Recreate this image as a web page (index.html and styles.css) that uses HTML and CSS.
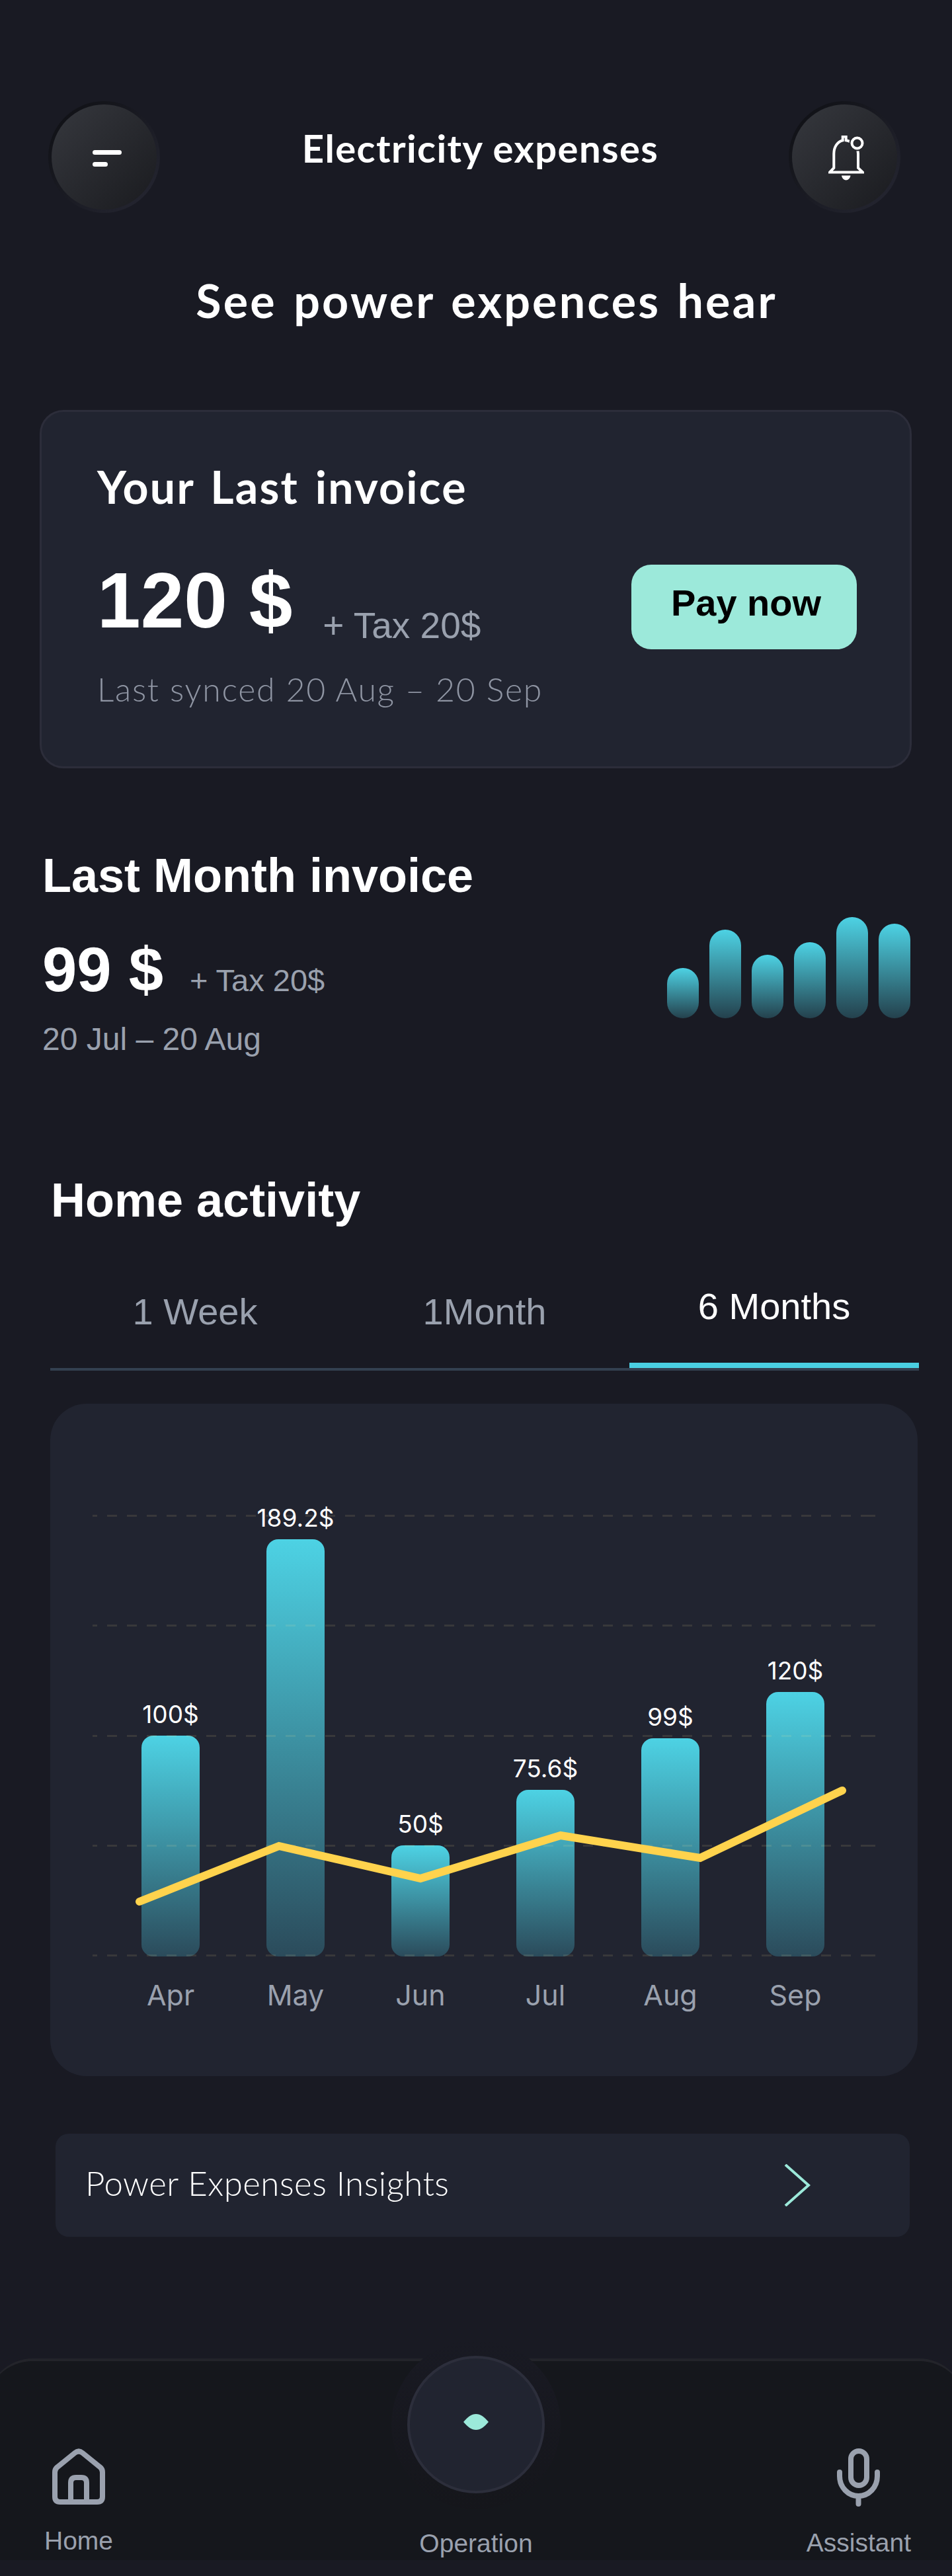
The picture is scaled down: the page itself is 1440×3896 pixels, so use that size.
FILE: index.html
```html
<!DOCTYPE html>
<html lang="en">
<head>
    <meta charset="UTF-8">
    <meta name="viewport" content="width=device-width, initial-scale=1.0">
    <title>Electricity expenses</title>
    <link rel="stylesheet" href="styles.css">
</head>
<body>
    <div class="page">
        <header class="top-bar">
            <button class="round-btn">
                <span class="menu-icon"><i class="menu-long"></i><i class="menu-short"></i></span>
            </button>
            <h1 class="top-title">Electricity expenses</h1>
            <button class="round-btn">
                <svg class="bell-icon" width="54" height="68" viewBox="0 0 54 68">
                    <path d="M2 55.5H52L45 49V27.5C45 17 36 9 26.7 7.3V1.5H21.7V7.3C14 9 8.3 17 8.3 27.5V49Z" fill="none" stroke="#fff" stroke-width="4"/>
                    <circle cx="43.5" cy="11.5" r="12" fill="#27282d"/>
                    <circle cx="43.5" cy="11.5" r="8" fill="none" stroke="#fff" stroke-width="4"/>
                    <path d="M20 60.5H33.5C33 64.5 30 67.5 26.7 67.5C23.5 67.5 20.5 64.5 20 60.5Z" fill="#fff"/>
                </svg>
            </button>
        </header>

        <h2 class="page-heading">See power expences hear</h2>

        <section class="invoice-card">
            <div class="invoice-info">
                <h3 class="card-title">Your Last invoice</h3>
                <div class="amount-row">
                    <span class="amount-big">120 $</span>
                    <span class="tax-big">+ Tax 20$</span>
                </div>
                <p class="synced">Last synced 20 Aug – 20 Sep</p>
            </div>
            <button class="pay-btn">Pay now</button>
        </section>

        <section class="last-month">
            <div>
                <h3 class="month-title">Last Month invoice</h3>
                <div class="amount-row-small">
                    <span class="amount-small">99 $</span>
                    <span class="tax-small">+ Tax 20$</span>
                </div>
                <p class="month-range">20 Jul – 20 Aug</p>
            </div>
            <div class="mini-bars">
                <div class="mini-bar" style="height: 76px"></div>
                <div class="mini-bar" style="height: 134px"></div>
                <div class="mini-bar" style="height: 96px"></div>
                <div class="mini-bar" style="height: 115px"></div>
                <div class="mini-bar" style="height: 153px"></div>
                <div class="mini-bar" style="height: 143px"></div>
            </div>
        </section>

        <h2 class="activity-title">Home activity</h2>

        <div class="tabs">
            <div class="tab">1 Week</div>
            <div class="tab">1Month</div>
            <div class="tab tab-active">6 Months</div>
        </div>

        <section class="chart-card">
            <div class="plot">
                <div class="grid-lines">
                    <i></i><i></i><i></i><i></i><i></i>
                </div>
                <div class="bars">
                    <div class="bar-col"><span class="bar-value">100$</span><div class="bar" style="height: 334px"></div></div>
                    <div class="bar-col"><span class="bar-value">189.2$</span><div class="bar" style="height: 631px"></div></div>
                    <div class="bar-col"><span class="bar-value">50$</span><div class="bar" style="height: 168px"></div></div>
                    <div class="bar-col"><span class="bar-value">75.6$</span><div class="bar" style="height: 252px"></div></div>
                    <div class="bar-col"><span class="bar-value">99$</span><div class="bar" style="height: 330px"></div></div>
                    <div class="bar-col"><span class="bar-value">120$</span><div class="bar" style="height: 400px"></div></div>
                </div>
                <svg class="trend" width="1184" height="668" viewBox="0 0 1184 668">
                    <polyline points="71,585 282,501 496,550 708,485 919,519 1134,417" fill="none" stroke="#ffd34d" stroke-width="12" stroke-linecap="round"/>
                </svg>
            </div>
            <div class="months">
                <span>Apr</span><span>May</span><span>Jun</span><span>Jul</span><span>Aug</span><span>Sep</span>
            </div>
        </section>

        <a class="insights">
            <span class="insights-text">Power Expenses Insights</span>
            <svg width="40" height="64" viewBox="0 0 40 64">
                <path d="M2 1L37 32L2 63" fill="none" stroke="#9ce9da" stroke-width="4"/>
            </svg>
        </a>

        <nav class="bottom-nav">
            <div class="nav-item">
                <svg width="80" height="85" viewBox="0 0 80 85">
                    <path d="M34 7L8 28Q4 31 4 36V73Q4 81 12 81H68Q76 81 76 73V36Q76 31 72 28L46 7Q40 2 34 7Z" fill="none" stroke="#9aa1ae" stroke-width="8"/>
                    <path d="M28 81V52Q28 44 36 44H44Q52 44 52 52V81" fill="none" stroke="#9aa1ae" stroke-width="8"/>
                </svg>
                <span>Home</span>
            </div>
            <div class="nav-center">
                <div class="halo">
                    <div class="center-btn">
                        <svg width="40" height="24" viewBox="0 0 40 24">
                            <path d="M1 12C8 4 13 0 20 0C27 0 32 4 39 12C32 20 27 24 20 24C13 24 8 20 1 12Z" fill="#9ce9da"/>
                        </svg>
                    </div>
                </div>
                <span>Operation</span>
            </div>
            <div class="nav-item">
                <svg width="65" height="88" viewBox="0 0 65 88">
                    <rect x="21" y="4" width="24" height="52" rx="12" fill="none" stroke="#9aa1ae" stroke-width="8"/>
                    <path d="M4 36V42C4 59 17 72 32.5 72C48 72 61 59 61 42V36" fill="none" stroke="#9aa1ae" stroke-width="8" stroke-linecap="round"/>
                    <path d="M32.5 72V84" fill="none" stroke="#9aa1ae" stroke-width="8" stroke-linecap="round"/>
                </svg>
                <span>Assistant</span>
            </div>
        </nav>
    </div>
</body>
</html>
```

FILE: styles.css
```css
* {
    box-sizing: border-box;
}

body {
    margin: 0;
    padding: 0;
    background-color: #191a23;
    font-family: "Liberation Sans", Arial, sans-serif;
    color: #fff;
}

h1, h2, h3, p {
    margin: 0;
}

.page {
    position: relative;
    width: 1440px;
    height: 3896px;
    overflow: hidden;
    display: flex;
    flex-direction: column;
}

/* top bar */
.top-bar {
    display: flex;
    justify-content: space-between;
    align-items: flex-start;
    margin-top: 153px;
    padding: 0 78px 0 73px;
}

.round-btn {
    width: 169px;
    height: 169px;
    padding: 0;
    display: flex;
    align-items: center;
    justify-content: center;
    border: 5px solid transparent;
    border-radius: 50%;
    background: linear-gradient(135deg, #36383e, #1a1b1f) padding-box,
                linear-gradient(135deg, #0e0f13, #262733) border-box;
}

.menu-icon {
    display: flex;
    flex-direction: column;
    gap: 11px;
    width: 44px;
    margin-top: 3px;
    margin-left: 8px;
}

.menu-icon i {
    display: block;
    height: 7px;
    border-radius: 4px;
    background-color: #fff;
}

.menu-short {
    width: 23px;
}

.bell-icon {
    margin-top: 3px;
    margin-left: 6px;
}

.top-title {
    margin-top: 39px;
    margin-left: 18px;
    font-family: Lato, sans-serif;
    font-size: 58px;
    font-weight: 700;
    line-height: 64px;
    letter-spacing: 1.4px;
}

.page-heading {
    margin-top: 92px;
    padding-left: 32px;
    text-align: center;
    font-family: Lato, sans-serif;
    font-size: 70px;
    font-weight: 700;
    line-height: 80px;
    letter-spacing: 3.2px;
    word-spacing: 5px;
}

/* last invoice */
.invoice-card {
    display: flex;
    justify-content: space-between;
    align-items: flex-start;
    height: 542px;
    margin: 126px 61px 0 60px;
    padding: 0 80px 0 84px;
    border: 3px solid #2c2d3a;
    border-radius: 36px;
    background-color: #212430;
}

.invoice-info {
    padding-top: 73px;
}

.card-title {
    font-family: Lato, sans-serif;
    font-size: 68px;
    font-weight: 700;
    line-height: 80px;
    letter-spacing: 2.2px;
    word-spacing: 6px;
}

.amount-row {
    display: flex;
    align-items: baseline;
    margin-top: 67px;
    line-height: 130px;
}

.amount-big {
    font-size: 118px;
    font-weight: 700;
}

.tax-big {
    position: relative;
    top: 16px;
    margin-left: 46px;
    font-size: 55px;
    color: #9aa1ae;
}

.synced {
    margin-top: 17px;
    font-family: Lato, sans-serif;
    font-size: 50px;
    font-weight: 300;
    line-height: 60px;
    letter-spacing: 1.7px;
    color: #8f95a3;
}

.pay-btn {
    width: 341px;
    height: 128px;
    margin-top: 231px;
    padding: 0 0 14px 6px;
    border: none;
    border-radius: 30px;
    background-color: #9ce9da;
    font-family: "Liberation Sans", Arial, sans-serif;
    font-size: 56px;
    font-weight: 700;
    color: #000;
}

/* last month */
.last-month {
    display: flex;
    justify-content: space-between;
    align-items: flex-start;
    margin-top: 120px;
    padding: 0 63px 0 64px;
}

.month-title {
    font-size: 72px;
    font-weight: 700;
    line-height: 84px;
}

.amount-row-small {
    display: flex;
    align-items: baseline;
    margin-top: 51px;
    line-height: 100px;
}

.amount-small {
    font-size: 94px;
    font-weight: 700;
}

.tax-small {
    margin-left: 40px;
    font-size: 47px;
    color: #9aa1ae;
}

.month-range {
    margin-top: 9px;
    font-size: 48px;
    line-height: 60px;
    color: #9aa1ae;
}

.mini-bars {
    display: flex;
    align-items: flex-end;
    gap: 16px;
    height: 153px;
    margin-top: 105px;
}

.mini-bar {
    width: 48px;
    border-radius: 24px;
    background: linear-gradient(180deg, #4dd2e4, #24414d);
}

/* home activity */
.activity-title {
    margin-top: 171px;
    padding-left: 77px;
    font-size: 72px;
    font-weight: 700;
    line-height: 84px;
}

.tabs {
    display: grid;
    grid-template-columns: repeat(3, 1fr);
    width: 1314px;
    height: 180px;
    margin-left: 76px;
    margin-top: 36px;
    border-bottom: 4px solid #334050;
}

.tab {
    padding-top: 58px;
    text-align: center;
    font-size: 56px;
    line-height: 66px;
    color: #9aa1ae;
}

.tab-active {
    height: 176px;
    padding-top: 50px;
    border-bottom: 8px solid #4acfe2;
    color: #fff;
}

.chart-card {
    width: 1312px;
    height: 1017px;
    margin-left: 76px;
    margin-top: 50px;
    padding: 168px 64px 0;
    border-radius: 55px;
    background-color: #212430;
}

.plot {
    position: relative;
    height: 668px;
}

.grid-lines {
    position: absolute;
    inset: 0;
    display: flex;
    flex-direction: column;
    justify-content: space-between;
    z-index: 1;
}

.grid-lines i {
    display: block;
    height: 3px;
    background: repeating-linear-gradient(90deg, rgba(255, 235, 150, 0.1) 0 15px, transparent 15px 30px);
    background-position: -8px 0;
}

.bars, .months {
    display: flex;
    gap: 101px;
    padding-left: 74px;
}

.bars {
    height: 100%;
    align-items: flex-end;
}

.bar-col {
    display: flex;
    flex-direction: column;
    align-items: center;
    width: 88px;
}

.bar-value {
    position: relative;
    z-index: 2;
    margin-bottom: 10px;
    font-family: Inter, sans-serif;
    font-size: 37px;
    line-height: 44px;
    white-space: nowrap;
}

.bar {
    width: 88px;
    border-radius: 18px;
    background: linear-gradient(180deg, #4dd2e4, #2b4b5b);
}

.trend {
    position: absolute;
    top: 0;
    left: 0;
    z-index: 3;
}

.months {
    margin-top: 30px;
}

.months span {
    width: 88px;
    display: flex;
    justify-content: center;
    font-family: Inter, sans-serif;
    font-size: 43px;
    line-height: 56px;
    color: #9aa1ae;
}

.insights {
    display: flex;
    justify-content: space-between;
    align-items: center;
    width: 1292px;
    height: 156px;
    margin-left: 84px;
    margin-top: 87px;
    padding: 0 150px 0 45px;
    border-radius: 20px;
    background-color: #212430;
    font-family: Lato, sans-serif;
    font-size: 51px;
    font-weight: 300;
    letter-spacing: 0.5px;
}

.insights-text {
    padding-bottom: 8px;
}

/* bottom nav */
.bottom-nav {
    position: relative;
    display: flex;
    justify-content: space-between;
    align-items: flex-start;
    width: 1480px;
    height: 305px;
    margin-left: -20px;
    margin-top: 184px;
    padding: 132px 82px 0 87px;
    border-top: 4px solid #23242a;
    border-radius: 70px 70px 0 0;
    background-color: #15171c;
}

.nav-item {
    display: flex;
    flex-direction: column;
    align-items: center;
    font-size: 39px;
    line-height: 46px;
    color: #9aa1ae;
}

.nav-item span {
    margin-top: 32px;
}

.nav-center {
    position: absolute;
    top: 0;
    left: 0;
    width: 100%;
    height: 100%;
    display: flex;
    justify-content: center;
    align-items: flex-end;
    padding-bottom: 2px;
    font-size: 39px;
    line-height: 46px;
    color: #9aa1ae;
}

.halo {
    position: absolute;
    top: -32px;
    left: 612px;
    width: 256px;
    height: 256px;
    display: flex;
    align-items: center;
    justify-content: center;
    border-radius: 50%;
    background: linear-gradient(180deg, #191a23, #15161b);
}

.center-btn {
    width: 208px;
    height: 208px;
    display: flex;
    align-items: center;
    justify-content: center;
    padding-bottom: 8px;
    border: 4px solid #2c2e3b;
    border-radius: 50%;
    background-color: #212430;
}
```
